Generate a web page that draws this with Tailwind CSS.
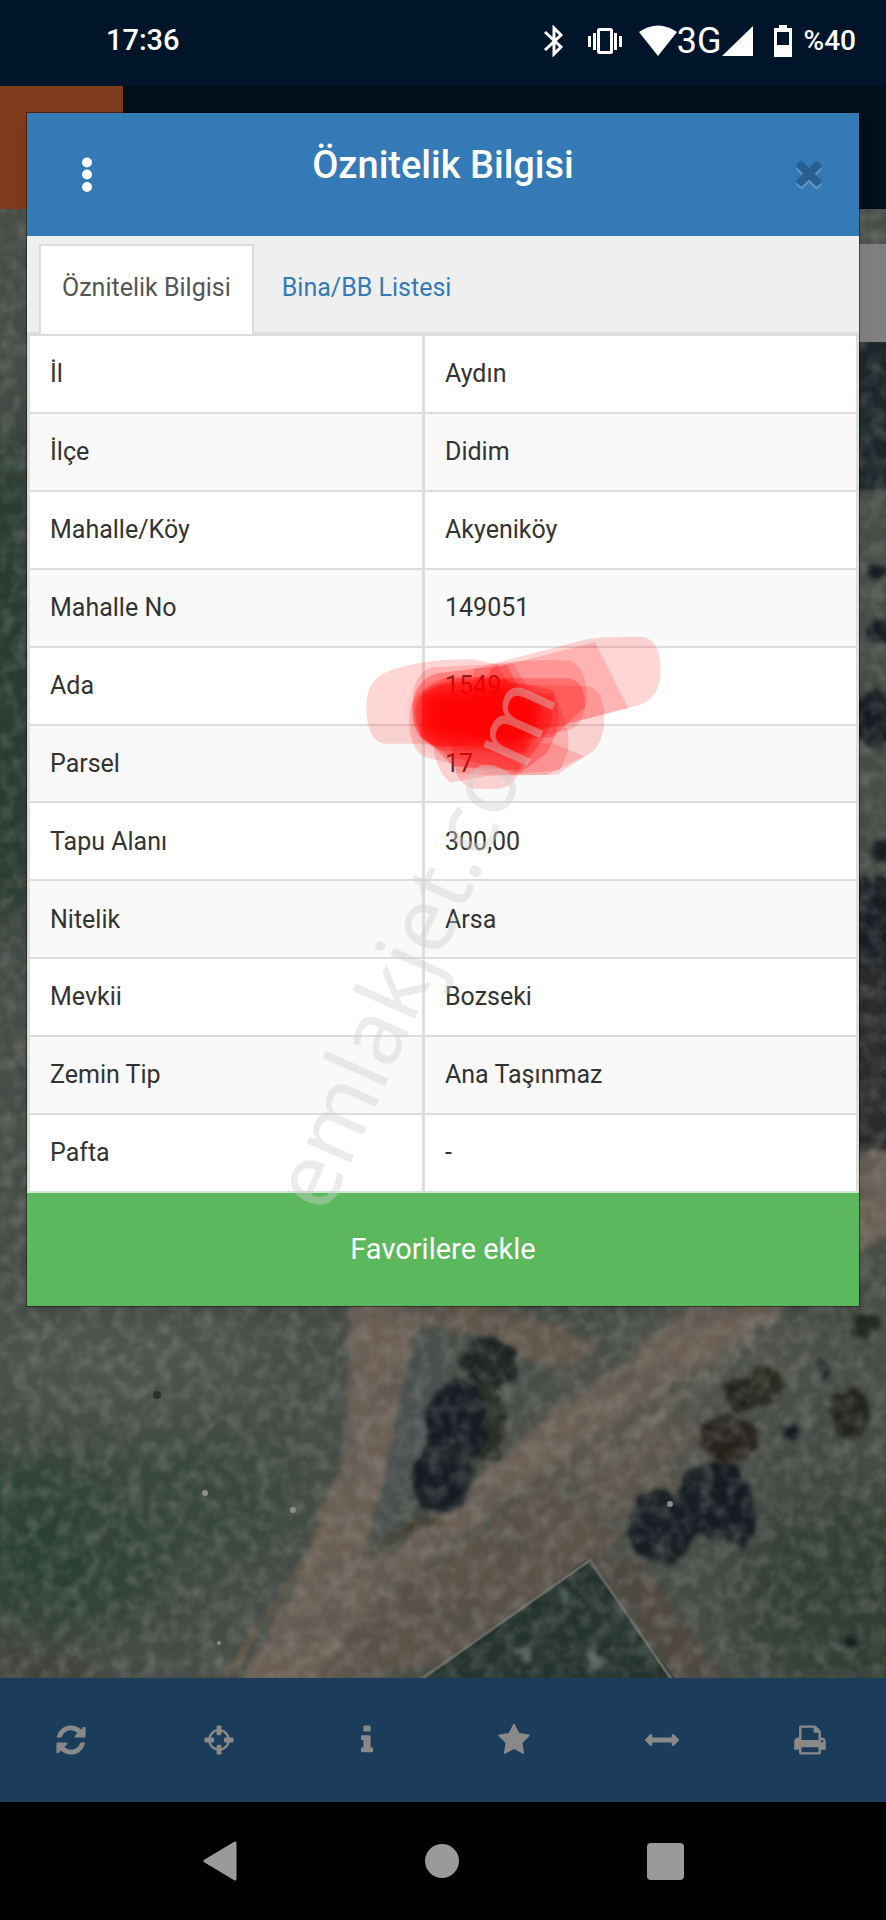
<!DOCTYPE html>
<html lang="tr">

<head>
    <meta charset="UTF-8" />
    <meta name="viewport" content="width=device-width, initial-scale=1.0" />
    <title>Öznitelik Bilgisi</title>
    <script src="https://cdn.jsdelivr.net/npm/@tailwindcss/browser@4"></script>
</head>

<body class="bg-black font-[Roboto,sans-serif]">
    <div class="relative flex flex-col min-h-screen overflow-hidden">
        <!-- Status bar -->
        <div class="flex items-center justify-between h-[86px] pl-[106px] pr-[30px] pb-1 bg-[#001529] text-white">
            <span class="text-[29px] font-medium">17:36</span>
            <div class="flex items-center">
                <svg class="w-5 h-8 mr-6" viewBox="0 0 20 32" fill="none" stroke="currentColor" stroke-width="3">
                    <path d="M2 7l16 15-7 7V3l7 7L2 25" />
                </svg>
                <svg class="w-9 h-8 mr-4" viewBox="0 0 36 32" fill="none" stroke="currentColor" stroke-width="3">
                    <rect x="11.500" y="4.500" width="13" height="23" rx="1" />
                    <path d="M7.500 8v17M2.500 11v11M28.500 8v17M33.500 11v11" />
                </svg>
                <svg class="w-[38px] h-8" viewBox="0 0 38 32" fill="currentColor">
                    <path d="M0 7Q19-6 38 7L19 31z" />
                </svg>
                <span class="text-[36px] leading-8">3G</span>
                <svg class="w-8 h-8 mr-5" viewBox="0 0 32 32" fill="currentColor">
                    <path d="M31 1v30H0z" />
                </svg>
                <svg class="w-[18px] h-8 mr-3" viewBox="0 0 18 32" fill="currentColor" fill-rule="evenodd">
                    <path d="M5 0h8v3h5v29H0V3h5zM3 7v13h12V7z" />
                </svg>
                <span class="text-[28px] font-medium">%40</span>
            </div>
        </div>

        <!-- App header -->
        <header class="flex h-[123px] bg-[#000f1a]">
            <div class="w-[123px] bg-[#7f3a1b]"></div>
        </header>

        <!-- Map -->
        <main class="relative flex-1 bg-[#434a44]">
            <svg class="absolute inset-0 w-full h-full" viewBox="0 209 886 1469" preserveAspectRatio="xMidYMax slice">
                <defs>
                    <filter id="soft" x="-20%" y="-20%" width="140%" height="140%">
                        <feGaussianBlur stdDeviation="30" />
                    </filter>
                    <filter id="rough" x="-10%" y="-10%" width="120%" height="120%">
                        <feTurbulence type="fractalNoise" baseFrequency="0.06" numOctaves="3" seed="4" />
                        <feDisplacementMap in="SourceGraphic" scale="14" xChannelSelector="R" yChannelSelector="G" />
                        <feGaussianBlur stdDeviation="3" />
                    </filter>
                    <filter id="leafy" x="-10%" y="-10%" width="120%" height="120%">
                        <feTurbulence type="fractalNoise" baseFrequency="0.06" numOctaves="3" seed="4" />
                        <feDisplacementMap in="SourceGraphic" scale="16" xChannelSelector="R" yChannelSelector="G" />
                        <feGaussianBlur stdDeviation="2" />
                    </filter>
                    <filter id="grain" x="0" y="0" width="100%" height="100%">
                        <feTurbulence type="fractalNoise" baseFrequency="0.07" numOctaves="3" seed="9" />
                        <feColorMatrix values="0 0 0 0 0.48  0 0 0 0 0.47  0 0 0 0 0.43  1.4 0 0 0 -0.55" />
                        <feGaussianBlur stdDeviation="1" />
                    </filter>
                    <filter id="shade" x="0" y="0" width="100%" height="100%">
                        <feTurbulence type="fractalNoise" baseFrequency="0.025" numOctaves="5" seed="21" />
                        <feColorMatrix values="0 0 0 0 0.05  0 0 0 0 0.07  0 0 0 0 0.06  0 1.8 0 0 -0.8" />
                        <feGaussianBlur stdDeviation="1" />
                    </filter>
                </defs>
                <rect y="209" width="886" height="1469" fill="#484d48" />
                <!-- fields -->
                <g filter="url(#soft)">
                    <rect x="-40" y="440" width="90" height="480" fill="#26382e" />
                    <ellipse cx="60" cy="1540" rx="130" ry="90" fill="#2c4035" />
                    <ellipse cx="190" cy="1500" rx="110" ry="70" fill="#38463d" />
                    <ellipse cx="130" cy="1360" rx="130" ry="60" fill="#50544f" />
                    <ellipse cx="30" cy="1690" rx="60" ry="30" fill="#403830" />
                    <ellipse cx="620" cy="1460" rx="90" ry="70" fill="#5f594f" />
                    <ellipse cx="720" cy="1350" rx="90" ry="40" fill="#565850" />
                    <ellipse cx="850" cy="1600" rx="110" ry="110" fill="#333d34" />
                </g>
                <!-- roads -->
                <g filter="url(#rough)">
                    <path d="M365 1580L443 1560 545 1478 620 1540 590 1560 443 1664 300 1690z" fill="#5b5248" />
                    <path d="M586 1557L640 1560 730 1690 676 1680z" fill="#50493f" />
                    <path d="M350 1290L425 1290 402 1380 392 1450 375 1510 365 1560 405 1545 443 1507 543 1420 643 1347 700 1300 780 1230 870 1150 900 1140 900 1225 780 1312 650 1400 543 1473 443 1553 365 1610 310 1690 235 1690 290 1600 330 1500 345 1440z" fill="#6c6057" />
                    <path d="M405 1290L500 1300 600 1345 560 1375 480 1335 425 1325z" fill="#62584d" />
                    <path d="M404 1385L420 1335 450 1335 440 1400 410 1500 372 1535z" fill="#4c5151" />
                    <path d="M326 1500L312 1550 250 1640 225 1680" fill="none" stroke="#7c6650" stroke-width="4" />
                    <path d="M372 1555L420 1520 443 1520" fill="none" stroke="#453a2c" stroke-width="5" />
                    <path d="M580 1478L680 1395 780 1315" fill="none" stroke="#817a6c" stroke-width="5" stroke-dasharray="16 14" />
                </g>
                <!-- fenced field -->
                <path d="M443 1666L586 1560 676 1680 420 1680z" fill="#25332f" />
                <path d="M420 1680L590 1560 672 1680" fill="none" stroke="#66655f" stroke-width="3" />
                <g fill="#53625c" filter="url(#leafy)">
                    <circle cx="524" cy="1653" r="8" />
                    <circle cx="596" cy="1660" r="8" />
                    <circle cx="566" cy="1598" r="6" />
                </g>
                <!-- trees -->
                <g filter="url(#leafy)" fill="#171a20">
                    <ellipse cx="490" cy="1362" rx="29" ry="25" fill="#1f2423" />
                    <ellipse cx="485" cy="1425" rx="24" ry="38" fill="#2a2e28" />
                    <ellipse cx="458" cy="1425" rx="32" ry="46" />
                    <ellipse cx="442" cy="1478" rx="30" ry="34" />
                    <ellipse cx="742" cy="1394" rx="18" ry="18" fill="#22241f" />
                    <ellipse cx="768" cy="1385" rx="17" ry="20" fill="#2a2b20" />
                    <ellipse cx="730" cy="1438" rx="30" ry="22" fill="#25231f" />
                    <ellipse cx="662" cy="1526" rx="34" ry="38" />
                    <ellipse cx="716" cy="1500" rx="38" ry="40" />
                    <ellipse cx="740" cy="1518" rx="16" ry="28" />
                    <ellipse cx="850" cy="1412" rx="20" ry="25" fill="#22231c" />
                    <ellipse cx="790" cy="1432" rx="7" ry="9" />
                    <ellipse cx="825" cy="1370" rx="7" ry="11" />
                    <ellipse cx="864" cy="1326" rx="15" ry="13" fill="#24251f" />
                    <circle cx="851" cy="1643" r="6" />
                    <rect x="850" y="340" width="50" height="150" fill="#1f262b" />
                    <circle cx="876" cy="573" r="10" />
                    <circle cx="880" cy="632" r="14" />
                    <ellipse cx="874" cy="720" rx="24" ry="28" />
                    <circle cx="884" cy="850" r="12" />
                    <rect x="850" y="880" width="50" height="90" />
                    <rect x="850" y="970" width="50" height="180" fill="#29292a" />
                </g>
                <rect y="209" width="886" height="1469" filter="url(#shade)" opacity="0.450" />
                <rect y="209" width="886" height="1469" filter="url(#grain)" opacity="0.400" />
                <g fill="#8d8d82">
                    <circle cx="205" cy="1493" r="3" />
                    <circle cx="293" cy="1510" r="3" />
                    <circle cx="219" cy="1643" r="2" />
                    <circle cx="670" cy="1504" r="3" />
                </g>
                <circle cx="157" cy="1395" r="4" fill="#2a302c" />
            </svg>
            <div class="absolute right-0 top-[35px] w-16 h-[98px] bg-[#7f7f7f]"></div>
        </main>

        <!-- Toolbar -->
        <footer class="grid grid-cols-6 h-[124px] bg-[#1b3d5b] text-[#898989] [&>button]:pr-[5px]">
            <button class="flex items-center justify-center" aria-label="Yenile">
                <svg class="w-[34px] h-[34px]" viewBox="0 0 1792 1792" fill="currentColor"><path d="M1639 1056q0 5-1 7-64 268-268 434.500t-478 166.500q-146 0-282.500-55t-243.500-157l-129 129q-19 19-45 19t-45-19-19-45v-448q0-26 19-45t45-19h448q26 0 45 19t19 45-19 45l-137 137q71 66 161 102t187 36q134 0 250-65t186-179q11-17 53-117 8-23 30-23h192q13 0 22.500 9.500t9.500 22.500zm25-800v448q0 26-19 45t-45 19h-448q-26 0-45-19t-19-45 19-45l138-138q-148-137-349-137-134 0-250 65t-186 179q-11 17-53 117-8 23-30 23h-199q-13 0-22.500-9.500t-9.500-22.500v-7q65-268 270-434.500t480-166.500q146 0 284 55.500t245 156.500l130-129q19-19 45-19t45 19 19 45z" /></svg>
            </button>
            <button class="flex items-center justify-center" aria-label="Konum">
                <svg class="w-[34px] h-[34px]" viewBox="0 0 1792 1792" fill="currentColor"><path d="M1325 1024h-109q-26 0-45-19t-19-45v-128q0-26 19-45t45-19h109q-32-108-112.500-188.500t-188.500-112.500v109q0 26-19 45t-45 19h-128q-26 0-45-19t-19-45v-109q-108 32-188.500 112.500t-112.500 188.500h109q26 0 45 19t19 45v128q0 26-19 45t-45 19h-109q32 108 112.500 188.500t188.500 112.500v-109q0-26 19-45t45-19h128q26 0 45 19t19 45v109q108-32 188.500-112.500t112.500-188.500zm339-192v128q0 26-19 45t-45 19h-143q-37 161-154.500 278.500t-278.500 154.500v143q0 26-19 45t-45 19h-128q-26 0-45-19t-19-45v-143q-161-37-278.500-154.500t-154.500-278.500h-143q-26 0-45-19t-19-45v-128q0-26 19-45t45-19h143q37-161 154.500-278.500t278.500-154.500v-143q0-26 19-45t45-19h128q26 0 45 19t19 45v143q161 37 278.500 154.500t154.500 278.500h143q26 0 45 19t19 45z" /></svg>
            </button>
            <button class="flex items-center justify-center" aria-label="Bilgi">
                <svg class="w-[34px] h-[34px]" viewBox="0 0 1792 1792" fill="currentColor"><path d="M1216 1344v128q0 26-19 45t-45 19h-512q-26 0-45-19t-19-45v-128q0-26 19-45t45-19h64v-384h-64q-26 0-45-19t-19-45v-128q0-26 19-45t45-19h384q26 0 45 19t19 45v576h64q26 0 45 19t19 45zm-128-1152v192q0 26-19 45t-45 19h-256q-26 0-45-19t-19-45v-192q0-26 19-45t45-19h256q26 0 45 19t19 45z" /></svg>
            </button>
            <button class="flex items-center justify-center" aria-label="Favoriler">
                <svg class="w-[34px] h-[34px]" viewBox="0 0 1792 1792" fill="currentColor"><path d="M1728 647q0 22-26 48l-363 354 86 500q1 7 1 20 0 21-10.500 35.500t-30.500 14.500q-19 0-40-12l-449-236-449 236q-22 12-40 12-21 0-31.500-14.500t-10.500-35.500q0-6 2-20l86-500-364-354q-25-27-25-48 0-37 56-46l502-73 225-455q19-41 49-41t49 41l225 455 502 73q56 9 56 46z" /></svg>
            </button>
            <button class="flex items-center justify-center" aria-label="Ölç">
                <svg class="w-[34px] h-[34px]" viewBox="0 0 1792 1792" fill="currentColor"><path d="M1792 896q0 26-19 45l-256 256q-19 19-45 19t-45-19-19-45v-128h-1024v128q0 26-19 45t-45 19-45-19l-256-256q-19-19-19-45t19-45l256-256q19-19 45-19t45 19 19 45v128h1024v-128q0-26 19-45t45-19 45 19l256 256q19 19 19 45z" /></svg>
            </button>
            <button class="flex items-center justify-center" aria-label="Yazdır">
                <svg class="w-[34px] h-[34px]" viewBox="0 0 1792 1792" fill="currentColor"><path d="M448 1536h896v-256h-896v256zm0-640h896v-384h-160q-40 0-68-28t-28-68v-160h-640v640zm1152 64q0-26-19-45t-45-19-45 19-19 45 19 45 45 19 45-19 19-45zm128 0v416q0 13-9.500 22.500t-22.500 9.500h-224v160q0 40-28 68t-68 28h-960q-40 0-68-28t-28-68v-160h-224q-13 0-22.500-9.500t-9.500-22.500v-416q0-79 56.500-135.500t135.500-56.500h64v-544q0-40 28-68t68-28h672q40 0 88 20t76 48l152 152q28 28 48 76t20 88v256h64q79 0 135.500 56.500t56.500 135.500z" /></svg>
            </button>
        </footer>

        <!-- Android navigation -->
        <nav class="flex items-center justify-center gap-[188px] h-[118px] bg-black text-[#9a9a9a]">
            <button aria-label="Geri">
                <svg class="block w-[34px] h-10" viewBox="0 0 34 40" fill="currentColor" stroke="currentColor" stroke-width="3" stroke-linejoin="round"><path d="M32 2v36L2 20z" /></svg>
            </button>
            <button class="w-[34px] h-[34px] rounded-full bg-[#9a9a9a]" aria-label="Ana ekran"></button>
            <button class="w-[37px] h-[37px] rounded bg-[#9a9a9a]" aria-label="Son uygulamalar"></button>
        </nav>

        <!-- Modal -->
        <section class="absolute inset-x-[27px] top-[113px] bg-white ring-1 ring-black/40 shadow-lg text-[25px] text-[#333]">
            <div class="grid grid-cols-[1fr_auto_1fr] items-center h-[123px] pl-9 pr-[26px] bg-[#337ab7] text-white">
                <button class="flex items-center justify-center w-12 h-12" aria-label="Menü">
                    <svg class="w-3 h-9" viewBox="0 0 12 36" fill="currentColor">
                        <circle cx="6" cy="5.500" r="5" />
                        <circle cx="6" cy="17.500" r="5" />
                        <circle cx="6" cy="30" r="5" />
                    </svg>
                </button>
                <h4 class="pr-2.5 pb-5 text-[38px] leading-10 font-medium">Öznitelik Bilgisi</h4>
                <button class="flex items-center justify-center justify-self-end w-12 h-12" aria-label="Kapat">
                    <svg class="w-[38px] h-[38px] shrink-0" viewBox="0 128 1792 1792">
                        <path fill="#5f96c8" d="M1490 1462q0 40-28 68l-136 136q-28 28-68 28t-68-28l-294-294-294 294q-28 28-68 28t-68-28l-136-136q-28-28-28-68t28-68l294-294-294-294q-28-28-28-68t28-68l136-136q28-28 68-28t68 28l294 294 294-294q28-28 68-28t68 28l136 136q28 28 28 68t-28 68l-294 294 294 294q28 28 28 68z" />
                        <path fill="#295f90" d="M1490 1322q0 40-28 68l-136 136q-28 28-68 28t-68-28l-294-294-294 294q-28 28-68 28t-68-28l-136-136q-28-28-28-68t28-68l294-294-294-294q-28-28-28-68t28-68l136-136q28-28 68-28t68 28l294 294 294-294q28-28 68-28t68 28l136 136q28 28 28 68t-28 68l-294 294 294 294q28 28 28 68z" />
                    </svg>
                </button>
            </div>

            <div class="flex items-stretch gap-[6px] h-[98px] pt-2 pl-3 bg-[#efefef] border-b-2 border-[#ddd]">
                <a href="#" class="flex items-center px-[21px] pb-1 -mb-[2px] bg-white border-2 border-b-0 border-[#ddd] text-[#555]">Öznitelik Bilgisi</a>
                <a href="#" class="flex items-center px-5 border-2 border-transparent text-[#337ab7]">Bina/BB Listesi</a>
            </div>

            <table class="w-full h-[857px] border-separate border-spacing-0 border-x-[3px] border-[#ddd]">
                <tbody class="[&_th]:w-[395px] [&_th]:border-r-[3px] [&_th]:font-normal [&_th]:text-left [&_th]:px-5 [&_td]:px-5 [&_th]:h-[77px] [&_th]:border-t-2 [&_td]:border-t-2 [&_th]:border-[#ddd] [&_td]:border-[#ddd] [&_tr:nth-child(even)]:bg-[#f9f9f9]">
                    <tr><th scope="row">İl</th><td>Aydın</td></tr>
                    <tr><th scope="row">İlçe</th><td>Didim</td></tr>
                    <tr><th scope="row">Mahalle/Köy</th><td>Akyeniköy</td></tr>
                    <tr><th scope="row">Mahalle No</th><td>149051</td></tr>
                    <tr><th scope="row">Ada</th><td>1549</td></tr>
                    <tr><th scope="row">Parsel</th><td>17</td></tr>
                    <tr><th scope="row">Tapu Alanı</th><td>300,00</td></tr>
                    <tr><th scope="row">Nitelik</th><td>Arsa</td></tr>
                    <tr><th scope="row">Mevkii</th><td>Bozseki</td></tr>
                    <tr><th scope="row">Zemin Tip</th><td>Ana Taşınmaz</td></tr>
                    <tr><th scope="row">Pafta</th><td>-</td></tr>
                </tbody>
            </table>

            <button class="block w-full h-[115px] bg-[#5cb85c] border-t-2 border-[#cfe8cf] text-white text-[29px]">Favorilere ekle</button>

            <!-- Marker strokes over Ada / Parsel -->
            <svg class="absolute left-[313px] top-[497px] w-[360px] h-[200px] pointer-events-none" viewBox="0 0 1080 600" fill="#f00">
                <defs>
                    <filter id="edge" x="-20%" y="-30%" width="140%" height="160%">
                        <feGaussianBlur stdDeviation="22" />
                    </filter>
                </defs>
                <g fill-opacity="0.160">
                    <path d="M79 290Q78 205 150 182 250 146 400 148L470 162 560 300 400 401H130Q80 390 79 290z" />
                    <path d="M400 176L740 88Q780 79 910 81 962 92 962 180 960 265 900 284L700 337 400 400z" />
                    <path d="M450 176L765 97 865 295 690 340 450 400z" />
                    <path d="M217 290Q215 190 275 172L520 160 600 300 560 430 300 420Q216 390 217 290z" />
                    <path d="M208 320Q210 240 300 220L740 228Q795 240 793 330 790 425 720 445L620 495H480L250 440Q205 410 208 320z" />
                    <path d="M470 160Q600 145 690 152 740 170 740 260 735 340 690 360L480 400 300 350z" />
                    <path d="M280 400L640 400 735 440 650 494 440 498 330 518Q285 480 280 400z" />
                    <path d="M340 400L560 400 530 500Q510 535 470 536H400Q350 520 345 470z" />
                    <path d="M300 300L640 260Q690 330 685 420L660 480 500 495 350 490z" />
                </g>
                <g fill-opacity="0.260">
                    <path d="M218 290Q225 210 290 190L500 165 590 330 500 410H290Q215 390 218 290z" />
                    <path d="M226 300Q240 220 330 200L560 205 690 205Q738 220 735 290L640 380 300 412Q225 390 226 300z" />
                    <path d="M250 250Q330 190 470 205L640 240Q680 330 620 430L540 490 330 440 240 380z" />
                    <path d="M245 260Q300 200 500 210L560 250 640 250Q650 330 600 400L540 480 340 470 250 380z" />
                </g>
                <path d="M245 260Q300 225 500 235L600 270Q610 370 540 430L430 400 280 390Q230 370 245 260z" fill-opacity="0.900" filter="url(#edge)" />
            </svg>
        </section>

        <!-- Watermark -->
        <svg class="absolute left-0 top-0 w-[886px] h-[1920px] pointer-events-none" viewBox="0 0 886 1920">
            <text transform="translate(327 1216) rotate(-66)" class="text-[90px] font-[Noto_Sans,sans-serif]" fill="#d0d0d0" fill-opacity="0.420">emlakjet.com</text>
        </svg>
    </div>
</body>

</html>
